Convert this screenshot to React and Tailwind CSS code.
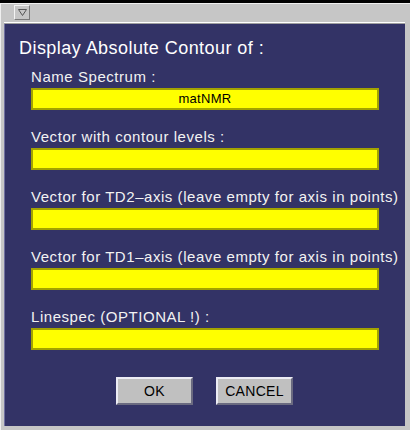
import React from 'react';

const fields = [
  { label: 'Name Spectrum :', value: 'matNMR' },
  { label: 'Vector with contour levels :', value: '' },
  { label: 'Vector for TD2\u2013axis (leave empty for axis in points)', value: '' },
  { label: 'Vector for TD1\u2013axis (leave empty for axis in points)', value: '' },
  { label: 'Linespec (OPTIONAL !) :', value: '' },
];

function Field({ label, value }) {
  return (
    <div className="flex flex-col">
      <div className="ml-[26px] h-[18px] text-[15px] leading-[18px] tracking-[0.55px] text-[#f2f2f2] whitespace-nowrap">{label}</div>
      <div className="ml-[26px] mt-[2px] w-[348px] h-[22px] bg-[#ffff00] border-2 border-[#a3a300] flex items-center justify-center text-[13px] tracking-[0.3px] text-black">
        {value}
      </div>
    </div>
  );
}

function Button({ children }) {
  return (
    <button className="w-[77px] h-[28px] bg-[#c0c0c0] border-2 border-t-[#ececf4] border-l-[#ececf4] border-b-[#6a6a80] border-r-[#6a6a80] text-[14px] tracking-[0.3px] text-black flex items-center justify-center">
      {children}
    </button>
  );
}

export default function App() {
  return (
    <div className="w-[410px] h-[430px] bg-black pt-[3px] flex flex-col" style={{ fontFamily: '"Liberation Sans", Arial, sans-serif' }}>
      <div className="flex-1 bg-[#c6c6c6] border-t border-l border-[#efefef] flex flex-col pl-[3px] pr-[5px] pb-[4px]">
        {/* title bar */}
        <div className="h-[18px] flex items-start pl-[10px] pt-[1px]">
          <div className="w-[16px] h-[15px] border border-t-[#f4f4f4] border-l-[#f4f4f4] border-b-[#7a7a7a] border-r-[#7a7a7a] flex items-center justify-center">
            <svg width="9" height="7" viewBox="0 0 9 7">
              <path d="M0.5 0.5 H8.5 L4.5 6.5 Z" fill="none" stroke="#555" strokeWidth="1" />
            </svg>
          </div>
        </div>
        <div className="h-[1px] bg-white" />
        <div className="h-[1px] bg-[#a0a0a0]" />
        {/* content */}
        <div className="flex-1 bg-[#333366] border-l border-[#7070a0] flex flex-col">
          <div className="ml-[14px] mt-[12px] h-[24px] text-[18px] leading-[24px] tracking-[0.45px] text-white whitespace-nowrap">
            Display Absolute Contour of :
          </div>
          <div className="mt-[8px] flex flex-col gap-[18px]">
            {fields.map((f) => (
              <Field key={f.label} label={f.label} value={f.value} />
            ))}
          </div>
          <div className="mt-[27px] flex gap-[23px] pl-[111px]">
            <Button>OK</Button>
            <Button>CANCEL</Button>
          </div>
        </div>
      </div>
    </div>
  );
}
